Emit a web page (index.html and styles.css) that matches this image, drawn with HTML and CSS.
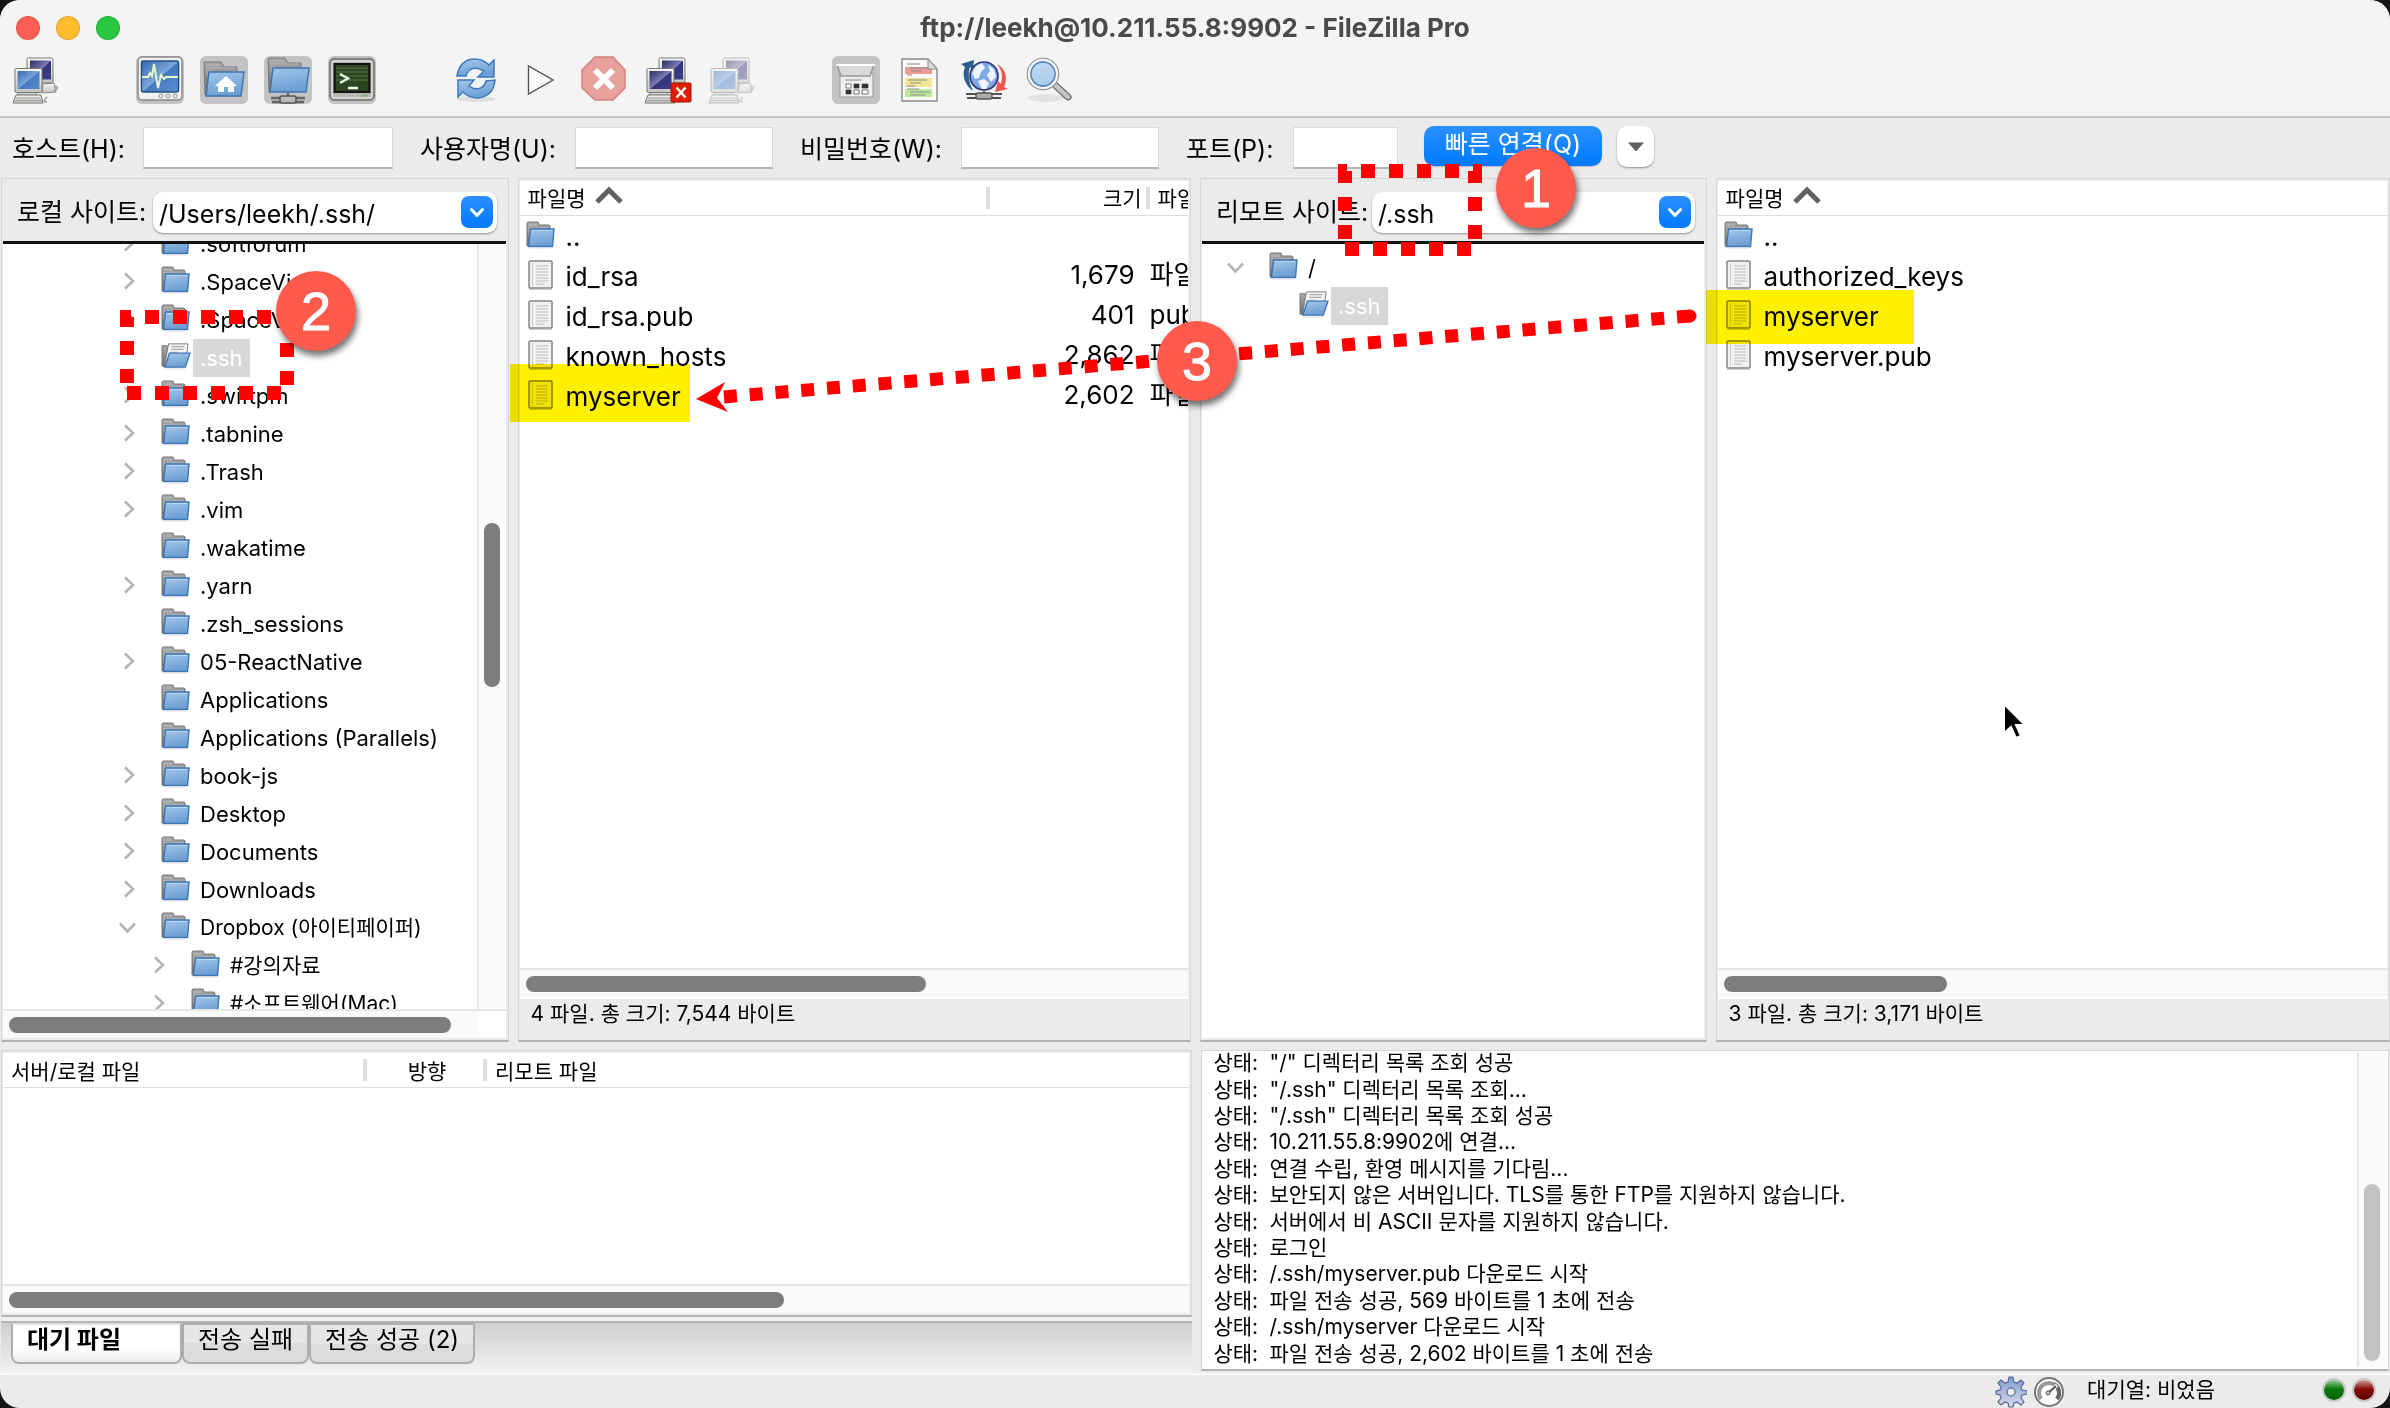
FILE: index.html
```html
<!DOCTYPE html>
<html lang="ko">
<head>
<meta charset="utf-8">
<title>ftp://leekh@10.211.55.8:9902 - FileZilla Pro</title>
<link rel="stylesheet" href="styles.css">
</head>
<body>
<svg class="defs" width="0" height="0" aria-hidden="true">
  <defs>
    <linearGradient id="blue" x1="0" y1="0" x2="0.3" y2="1"><stop offset="0" stop-color="#a3c6ea"/><stop offset="1" stop-color="#6c9fd3"/></linearGradient>
    <linearGradient id="screen" x1="0" y1="0" x2="1" y2="1"><stop offset="0" stop-color="#3568ae"/><stop offset=".5" stop-color="#7ba6dc"/><stop offset=".52" stop-color="#4579bf"/><stop offset="1" stop-color="#5b8fd2"/></linearGradient>
    <linearGradient id="navy" x1="0" y1="0" x2="1" y2="1"><stop offset="0" stop-color="#2a2a68"/><stop offset=".5" stop-color="#7d7db2"/><stop offset=".52" stop-color="#34347a"/><stop offset="1" stop-color="#40408a"/></linearGradient>
    <linearGradient id="grey" x1="0" y1="0" x2="0" y2="1"><stop offset="0" stop-color="#f8f8f5"/><stop offset="1" stop-color="#c4c4be"/></linearGradient>
    <linearGradient id="back" x1="0" y1="0" x2="0" y2="1"><stop offset="0" stop-color="#a9a9a9"/><stop offset="1" stop-color="#6e6e6e"/></linearGradient>
    <linearGradient id="gear" x1="0" y1="0" x2="0" y2="1"><stop offset="0" stop-color="#7d9cca"/><stop offset="1" stop-color="#dcd9ee"/></linearGradient>
    <symbol id="folder" viewBox="0 0 30 28">
      <path d="M1 25V2l1-1h10l1 3h10l1 1v18z" fill="url(#back)" stroke="#777"/>
      <path d="M2 4h9M2 7h20M2 10h4M2 13h3" stroke="#bbb"/>
      <path d="M4.500 8h23.500l-1.500 17.500H2.500z" fill="url(#blue)" stroke="#3e75b5" stroke-width="1.400"/>
      <path d="M6 9.500h20" stroke="#bcd8f3"/><path d="M3 27h22" stroke="#ddd"/>
    </symbol>
    <symbol id="folder-open" viewBox="0 0 32 30">
      <path d="M1 26V4h6l3 4v18z" fill="url(#back)" stroke="#777"/>
      <path d="M8 2h21l-3 22H4z" fill="#f4f4f4" stroke="#777"/>
      <path d="M11 5h14M11 8h13M10 11h8" stroke="#aaa" stroke-width="1.300"/>
      <path d="M9 12h22l-5 15H4z" fill="url(#blue)" stroke="#3e75b5" stroke-width="1.400"/><path d="M4 29h22" stroke="#ddd"/>
    </symbol>
    <symbol id="file" viewBox="0 0 26 30">
      <rect x="1" y="1" width="23" height="27" rx="1" fill="#f1f1f1" stroke="#858585" stroke-width="1.500"/>
      <path d="M4.500 3v23" stroke="#ccc"/>
      <path d="M8 6h12M8 9h12M8 12h12M8 15h12M8 18h12M8 21h12M8 24h8" stroke="#bbb"/>
      <path d="M1 29.500h23" stroke="#ccc"/>
    </symbol>
    <symbol id="right" viewBox="0 0 24 24"><path d="M8 4.500l8 7.500-8 7.500" fill="none" stroke="#b4b4b4" stroke-width="2.600"/></symbol>
    <symbol id="down" viewBox="0 0 24 24"><path d="M3 8.500l7.500 8 7.500-8" fill="none" stroke="#b4b4b4" stroke-width="2.600"/></symbol>
    <symbol id="sort" viewBox="0 0 28 20"><path d="M2 16L14 4l12 12" fill="none" stroke="#626262" stroke-width="5"/></symbol>
    <symbol id="pick" viewBox="0 0 32 32"><path d="M10.500 13.500l5.500 6 5.500-6" fill="none" stroke="#fff" stroke-width="3" stroke-linecap="round" stroke-linejoin="round"/></symbol>
    <symbol id="pcs" viewBox="0 0 48 48">
      <path d="M31 28l11-1 2 9-14 1z" fill="url(#grey)" stroke="#888"/>
      <rect x="15" y="2" width="26" height="25" rx="1.500" fill="url(#grey)" stroke="#777"/>
      <rect x="18" y="4.500" width="21" height="19" fill="url(#navy)"/>
      <path d="M42 31c5-2 4 3 0 3M35 41c-3 3-4 5 0 5" fill="none" stroke="#999" stroke-width="1.500"/>
      <path d="M8 35h14l3 4H5z" fill="#ddd" stroke="#888"/>
      <rect x="3" y="12.500" width="27" height="24" rx="1.500" fill="url(#grey)" stroke="#777"/>
      <rect x="5.500" y="15" width="22" height="18"/>
      <path d="M4 39h25l2 8H1z" fill="url(#grey)" stroke="#777"/>
      <path d="M4 42h25M3 44.500h27" stroke="#999"/>
    </symbol>
  </defs>
</svg>

<div class="window">
  <header class="titlebar">
    <div class="lights"><button class="light close" aria-label="닫기"></button><button class="light minimize" aria-label="최소화"></button><button class="light maximize" aria-label="확대"></button></div>
    <h1>ftp://leekh@10.211.55.8:9902 - FileZilla Pro</h1>
    <div class="toolbar">
      <div class="group">
        <button class="tool pc-blue" aria-label="사이트 관리자"><svg viewBox="0 0 48 48"><use href="#pcs"/></svg></button>
      </div>
      <div class="group">
        <button class="tool on" aria-label="메시지 로그"><svg viewBox="0 0 48 48"><rect x="2" y="1" width="44" height="43" rx="4" fill="#f1f1ee" stroke="#888" stroke-width="1.500"/><rect x="5.500" y="5" width="37" height="31" rx="2" fill="url(#screen)" stroke="#234d84" stroke-width="1.500"/><path d="M6 21h6l2-4 2 3 2-12 4 24 3-13 3 4 2-2h12" fill="none" stroke="#e8f7c8" stroke-width="2"/><g fill="#eee" stroke="#999"><circle cx="25" cy="40" r="2"/><circle cx="32" cy="40" r="2"/><circle cx="39" cy="40" r="2"/></g></svg></button>
        <button class="tool on" aria-label="로컬 트리"><svg viewBox="0 0 48 48"><path d="M5 39L4 6h17l3 5h13v26z" fill="url(#back)" stroke="#777"/><path d="M6 9h14M6 12h29M6 15h5M6 18h4" stroke="#b5b5b5"/><path d="M9 16h35l-3 24H6z" fill="url(#blue)" stroke="#3e75b5" stroke-width="1.500"/><path d="M26 20l11 10h-3v6h-6v-5h-4v5h-6v-6h-3z" fill="#fff"/></svg></button>
        <button class="tool on" aria-label="리모트 트리"><svg viewBox="0 0 48 48"><path d="M5 36L4 2h17l3 5h13v27z" fill="url(#back)" stroke="#777"/><path d="M6 5h14M6 8h29M6 11h5M6 14h4" stroke="#b5b5b5"/><path d="M9 12h36l-3 24H6z" fill="url(#blue)" stroke="#3e75b5" stroke-width="1.500"/><path d="M24 37v5M7 42h34M8 46h32" stroke="#666" stroke-width="2.500"/><rect x="16" y="40" width="16" height="7" rx="2" fill="#b8b8b8" stroke="#555" stroke-width="1.500"/></svg></button>
        <button class="tool on" aria-label="터미널"><svg viewBox="0 0 48 48"><rect x="2" y="3" width="44" height="41" rx="4" fill="#b9b9b4" stroke="#707070" stroke-width="1.500"/><rect x="4" y="5" width="40" height="37" rx="3" fill="none" stroke="#eee"/><rect x="6.500" y="8" width="35" height="28" fill="#2c4520" stroke="#111" stroke-width="2"/><path d="M8 12h32M8 16h32M8 20h32M8 24h32" stroke="#587646"/><path d="M12 18l8 4.500-8 4.500M20 32h10" fill="none" stroke="#e8ffe8" stroke-width="2.400"/><rect x="33" y="38.500" width="7" height="2" fill="#8a8"/></svg></button>
      </div>
      <div class="group">
        <button class="tool" aria-label="새로고침"><svg viewBox="0 0 48 48"><ellipse cx="24" cy="43" rx="19" ry="3" fill="#ddd"/><g fill="url(#blue)" stroke="#3c78bd" stroke-width="1.500"><path d="M5 20C7 8 14 3 23 3c7 0 11 3 14 6l5-5v17H26l6-6c-8-5-16-3-18 5z"/><path d="M43 24c-1 12-8 17-17 18-7 0-12-3-15-6l-5 5V24h16l-5 6c7 5 15 3 17-5z"/></g></svg></button>
        <button class="tool" aria-label="대기열 처리"><svg viewBox="0 0 48 48"><path d="M12.500 10v28L37 24z" fill="#fafafa" stroke="#555" stroke-width="1.400"/></svg></button>
        <button class="tool" aria-label="취소"><svg viewBox="0 0 48 48"><path d="M15 1h18l12 13v18L33 44H15L2 32V14z" fill="#e7a29d" stroke="#d87e79" stroke-width="1.500"/><path d="M15 14l18 18M33 14L15 32" stroke="#fff" stroke-width="6"/></svg></button>
        <button class="tool pc-navy" aria-label="연결 끊기"><svg viewBox="0 0 48 48"><use href="#pcs"/><rect x="27" y="27" width="20" height="19" rx="1" fill="#e01e05" stroke="#a51300"/><path d="M32.500 31.500l9 10M41.500 31.500l-9 10" stroke="#fff" stroke-width="2.600"/></svg></button>
        <button class="tool pc-blue faded" aria-label="다시 연결"><svg viewBox="0 0 48 48"><use href="#pcs"/></svg></button>
      </div>
      <div class="group">
        <button class="tool on" aria-label="파일 목록 필터"><svg viewBox="0 0 48 48"><rect x="8" y="17" width="33" height="24" fill="#eee" stroke="#999"/><path d="M5 9h37l-4 11H9z" fill="#d9d9d9" stroke="#999" stroke-width="1.500"/><path d="M4 9h39" stroke="#fff" stroke-width="2"/><path d="M13 24h17" stroke="#bbb" stroke-width="2"/><path d="M14 28h5v4h-5zM22 28h5v4h-5zM30 28h6v4h-6zM14 34h5v4h-5zM22 34h5v4h-5zM30 34h6v4h-6z" fill="#fff" stroke="#777"/><path d="M22 28h5v4h-5zM30 28h6v4h-6zM14 34h5v4h-5z" fill="#333"/></svg></button>
        <button class="tool" aria-label="디렉터리 비교"><svg viewBox="0 0 48 48"><path d="M6 3h26l9 10v32H6z" fill="#fafafa" stroke="#888" stroke-width="1.400"/><path d="M9 11h27v7H9z" fill="#eb9a97"/><path d="M9 22h27v9H9z" fill="#f3e795"/><path d="M9 33h27v8H9z" fill="#bfe8a0"/><path d="M11 8h13M14 12h18M15 15h10M11 19h5M12 24h19M14 27h11M11 30h8M11 33h12M14 36h20M14 39h16" stroke="#8b8b8b"/><path d="M32 3v10h9z" fill="#ddd" stroke="#888"/></svg></button>
        <button class="tool" aria-label="동기화된 탐색"><svg viewBox="0 0 48 48"><path d="M14 4L1 8l4 3C1 20 6 30 13 35 8 25 8 17 10 11l3 3z" fill="#2b5f91"/><path d="M37 8c9 5 11 14 7 23l4 2-13 3 3-11 3 3c2-8 1-14-4-20z" fill="#f0564d"/><circle cx="24" cy="20" r="14" fill="#7fa9e2" stroke="#343478" stroke-width="1.700"/><path d="M12 17l4-7 6-3 3 5-4 4-2 6-4 1zM18 25l6-2 5 4-3 6h-4zM28 9l6 4 2 8-5 5-4-7 3-4z" fill="#eef4fb"/><path d="M24 35v7M6 38h36M7 42h34" stroke="#555" stroke-width="1.800"/><rect x="16" y="37" width="16" height="6" rx="2" fill="#aaa" stroke="#555" stroke-width="1.300"/></svg></button>
        <button class="tool" aria-label="파일 검색"><svg viewBox="0 0 48 48"><ellipse cx="22" cy="42" rx="18" ry="4" fill="#e2e2e2"/><path d="M31 29l13 12" stroke="#666" stroke-width="7" stroke-linecap="round"/><path d="M31 29l13 12" stroke="#c4c4c4" stroke-width="4.500" stroke-linecap="round"/><circle cx="19" cy="18" r="14" fill="#d0e4f8" stroke="#8b8b8b" stroke-width="4.500"/><circle cx="19" cy="18" r="14" fill="none" stroke="#f4f4f4" stroke-width="2.500"/><circle cx="19" cy="18" r="12" fill="url(#blue)" fill-opacity=".35" stroke="#4f85c5" stroke-width="1.300"/></svg></button>
      </div>
    </div>
  </header>

  <form class="quick">
    <div class="field host"><label for="host">호스트(H):</label><input id="host" type="text"></div>
    <div class="field user"><label for="user">사용자명(U):</label><input id="user" type="text"></div>
    <div class="field pass"><label for="pass">비밀번호(W):</label><input id="pass" type="password"></div>
    <div class="field port"><label for="port">포트(P):</label><input id="port" type="text"></div>
    <button type="button" class="connect">빠른 연결(Q)</button>
    <button type="button" class="history" aria-label="최근 연결"><svg viewBox="0 0 20 12"><path d="M1 1h18l-9 10z" fill="#606060"/></svg></button>
  </form>

  <main class="panes">
    <section class="pane">
      <div class="site local"><label for="local">로컬 사이트:</label><div class="combo"><select id="local"><option>/Users/leekh/.ssh/</option></select><svg class="pick" viewBox="0 0 32 32"><use href="#pick"/></svg></div></div>
      <div class="treebox">
        <div class="treerow">
          <ul class="tree scrolled">
            <li><svg class="chev"><use href="#right"/></svg><svg class="ico"><use href="#folder"/></svg><span>.softforum</span></li>
            <li><svg class="chev"><use href="#right"/></svg><svg class="ico"><use href="#folder"/></svg><span>.SpaceVim</span></li>
            <li><svg class="chev"><use href="#right"/></svg><svg class="ico"><use href="#folder"/></svg><span>.SpaceVim.d</span></li>
            <li><i class="chev"></i><svg class="ico"><use href="#folder-open"/></svg><span class="selected">.ssh</span></li>
            <li><svg class="chev"><use href="#right"/></svg><svg class="ico"><use href="#folder"/></svg><span>.swiftpm</span></li>
            <li><svg class="chev"><use href="#right"/></svg><svg class="ico"><use href="#folder"/></svg><span>.tabnine</span></li>
            <li><svg class="chev"><use href="#right"/></svg><svg class="ico"><use href="#folder"/></svg><span>.Trash</span></li>
            <li><svg class="chev"><use href="#right"/></svg><svg class="ico"><use href="#folder"/></svg><span>.vim</span></li>
            <li><i class="chev"></i><svg class="ico"><use href="#folder"/></svg><span>.wakatime</span></li>
            <li><svg class="chev"><use href="#right"/></svg><svg class="ico"><use href="#folder"/></svg><span>.yarn</span></li>
            <li><i class="chev"></i><svg class="ico"><use href="#folder"/></svg><span>.zsh_sessions</span></li>
            <li><svg class="chev"><use href="#right"/></svg><svg class="ico"><use href="#folder"/></svg><span>05-ReactNative</span></li>
            <li><i class="chev"></i><svg class="ico"><use href="#folder"/></svg><span>Applications</span></li>
            <li><i class="chev"></i><svg class="ico"><use href="#folder"/></svg><span>Applications (Parallels)</span></li>
            <li><svg class="chev"><use href="#right"/></svg><svg class="ico"><use href="#folder"/></svg><span>book-js</span></li>
            <li><svg class="chev"><use href="#right"/></svg><svg class="ico"><use href="#folder"/></svg><span>Desktop</span></li>
            <li><svg class="chev"><use href="#right"/></svg><svg class="ico"><use href="#folder"/></svg><span>Documents</span></li>
            <li><svg class="chev"><use href="#right"/></svg><svg class="ico"><use href="#folder"/></svg><span>Downloads</span></li>
            <li class="hangul"><svg class="chev"><use href="#down"/></svg><svg class="ico"><use href="#folder"/></svg><span>Dropbox (아이티페이퍼)</span></li>
            <li class="child hangul"><svg class="chev"><use href="#right"/></svg><svg class="ico"><use href="#folder"/></svg><span>#강의자료</span></li>
            <li class="child hangul"><svg class="chev"><use href="#right"/></svg><svg class="ico"><use href="#folder"/></svg><span>#소프트웨어(Mac)</span></li>
          </ul>
          <div class="vtrack tree-v"><div class="thumb"></div></div>
        </div>
        <div class="htrack with-corner"><div class="thumb tree-h"></div></div>
      </div>
    </section>

    <section class="pane">
      <div class="list">
        <table>
          <colgroup><col class="c-name"><col class="c-size"><col class="c-type"></colgroup>
          <thead><tr><th>파일명 <svg class="sort"><use href="#sort"/></svg></th><th class="num">크기</th><th>파일 유형</th></tr></thead>
          <tbody>
            <tr><td><svg class="ico"><use href="#folder"/></svg>..</td><td></td><td></td></tr>
            <tr><td><svg class="ico"><use href="#file"/></svg>id_rsa</td><td class="num">1,679</td><td>파일</td></tr>
            <tr><td><svg class="ico"><use href="#file"/></svg>id_rsa.pub</td><td class="num">401</td><td>pub-파일</td></tr>
            <tr><td><svg class="ico"><use href="#file"/></svg>known_hosts</td><td class="num">2,862</td><td>파일</td></tr>
            <tr><td><svg class="ico"><use href="#file"/></svg>myserver</td><td class="num">2,602</td><td>파일</td></tr>
          </tbody>
        </table>
      </div>
      <div class="htrack"><div class="thumb list-h"></div></div>
      <p class="summary">4 파일. 총 크기: 7,544 바이트</p>
    </section>

    <section class="pane">
      <div class="site remote"><label for="remote">리모트 사이트:</label><div class="combo"><select id="remote"><option>/.ssh</option></select><svg class="pick" viewBox="0 0 32 32"><use href="#pick"/></svg></div></div>
      <div class="treebox">
        <ul class="tree remote-tree">
          <li><svg class="chev"><use href="#down"/></svg><svg class="ico"><use href="#folder"/></svg><span>/</span></li>
          <li class="child"><i class="chev"></i><svg class="ico"><use href="#folder-open"/></svg><span class="selected">.ssh</span></li>
        </ul>
      </div>
    </section>

    <section class="pane">
      <div class="list">
        <table>
          <thead><tr><th class="last">파일명 <svg class="sort"><use href="#sort"/></svg></th></tr></thead>
          <tbody>
            <tr><td><svg class="ico"><use href="#folder"/></svg>..</td></tr>
            <tr><td><svg class="ico"><use href="#file"/></svg>authorized_keys</td></tr>
            <tr><td><svg class="ico"><use href="#file"/></svg>myserver</td></tr>
            <tr><td><svg class="ico"><use href="#file"/></svg>myserver.pub</td></tr>
          </tbody>
        </table>
      </div>
      <div class="htrack"><div class="thumb remote-h"></div></div>
      <p class="summary">3 파일. 총 크기: 3,171 바이트</p>
    </section>
  </main>

  <div class="lower">
    <section class="transfers">
      <div class="pane queue">
        <div class="list">
          <table>
            <colgroup><col class="q-local"><col class="q-dir"><col></colgroup>
            <thead><tr><th>서버/로컬 파일</th><th class="mid">방향</th><th class="last">리모트 파일</th></tr></thead>
          </table>
        </div>
        <div class="htrack"><div class="thumb queue-h"></div></div>
      </div>
      <nav class="tabs"><button class="active">대기 파일</button><button>전송 실패</button><button>전송 성공 (2)</button></nav>
    </section>
    <section class="pane log">
      <ol>
        <li><span>상태:</span>"/" 디렉터리 목록 조회 성공</li>
        <li><span>상태:</span>"/.ssh" 디렉터리 목록 조회...</li>
        <li><span>상태:</span>"/.ssh" 디렉터리 목록 조회 성공</li>
        <li><span>상태:</span>10.211.55.8:9902에 연결...</li>
        <li><span>상태:</span>연결 수립, 환영 메시지를 기다림...</li>
        <li><span>상태:</span>보안되지 않은 서버입니다. TLS를 통한 FTP를 지원하지 않습니다.</li>
        <li><span>상태:</span>서버에서 비 ASCII 문자를 지원하지 않습니다.</li>
        <li><span>상태:</span>로그인</li>
        <li><span>상태:</span>/.ssh/myserver.pub 다운로드 시작</li>
        <li><span>상태:</span>파일 전송 성공, 569 바이트를 1 초에 전송</li>
        <li><span>상태:</span>/.ssh/myserver 다운로드 시작</li>
        <li><span>상태:</span>파일 전송 성공, 2,602 바이트를 1 초에 전송</li>
      </ol>
      <div class="vtrack log-v"><div class="thumb"></div></div>
    </section>
  </div>

  <footer class="status">
    <svg class="gear" viewBox="0 0 32 32"><path d="M14 1h4l1 5 3 1 4-3 3 3-3 4 1 3 5 1v3l-5 1-1 3 3 4-3 3-4-3-3 1-1 4h-4l-1-4-3-1-4 3-3-3 3-4-1-3-4-1v-3l4-1 1-3-3-4 3-3 4 3 3-1z" fill="url(#gear)" stroke="#55688f" stroke-width="1.200"/><circle cx="16" cy="16" r="4" fill="#eee" stroke="#6d7da3" stroke-width="1.500"/></svg>
    <svg class="gauge" viewBox="0 0 32 32"><circle cx="16" cy="16" r="14" fill="#fdfdfd" stroke="#777" stroke-width="2"/><path d="M8 23a10 10 0 1 1 16 0" fill="none" stroke="#999" stroke-width="4"/><path d="M21 8a10 10 0 0 1 3 15" fill="none" stroke="#666" stroke-width="4"/><path d="M15 17l9-8" stroke="#eee" stroke-width="4"/><path d="M15 17l8-7" stroke="#555" stroke-width="2"/><circle cx="15" cy="17" r="2" fill="#ccc" stroke="#555"/></svg>
    <p>대기열: 비었음</p>
    <i class="led green"></i><i class="led red"></i>
  </footer>
</div>

<div class="marker marker-local"></div>
<div class="marker marker-remote"></div>
<svg class="notes" width="2390" height="1408" viewBox="0 0 2390 1408">
  <g fill="#f00">
    <path d="M1338 164h9v7h5v12h-14zM1473 164h9v19h-14v-12h5zM1361 164h14v14h-14zM1389 164h14v14h-14zM1417 164h14v14h-14zM1445 164h14v14h-14zM1338 197h14v14h-14zM1338 225h14v14h-14zM1468 197h14v14h-14zM1468 225h14v14h-14zM1345 242h14v14h-14zM1373 242h14v14h-14zM1401 242h14v14h-14zM1429 242h14v14h-14zM1457 242h14v14h-14z"/>
    <path d="M120 310h11v7h3v10h-14zM145 310h14v14h-14zM173 310h14v14h-14zM201 310h14v14h-14zM229 310h14v14h-14zM257 310h14v14h-14zM120 341h14v14h-14zM120 369h14v14h-14zM280 343h14v14h-14zM280 371h14v14h-14zM127 386h14v14h-14zM155 386h14v14h-14zM183 386h14v14h-14zM211 386h14v14h-14zM239 386h14v14h-14zM267 386h14v14h-14z"/>
    <circle cx="1690" cy="316" r="6.500"/>
    <path d="M696 399l29-17-8 16 11 14z"/>
  </g>
  <path d="M1690 316L723 397" stroke="#f00" stroke-width="13" stroke-dasharray="13 12.850"/>
  <path d="M2004 704v29l7-6 5 11 5-2-5-11h9z" fill="#000" stroke="#fff" stroke-width="2"/>
  <g class="balls"><circle cx="1536" cy="188" r="40"/><circle cx="316" cy="311" r="40"/><circle cx="1197" cy="361" r="40"/></g>
  <g class="digits"><text x="1536" y="207">1</text><text x="316" y="330">2</text><text x="1197" y="380">3</text></g>
</svg>
</body>
</html>
```
FILE: styles.css
```css
* { box-sizing: border-box; }
body {
  margin: 0;
  background: #141414;
  color: #000;
  font: 22px/28px Inter, "Noto Sans CJK KR", sans-serif;
}
button, input, select { font: inherit; color: inherit; border: 0; margin: 0; padding: 0; }
ul, ol { list-style: none; margin: 0; padding: 0; }
p, h1 { margin: 0; }
svg { display: block; flex: none; }
.defs { position: absolute; }

.window {
  height: 100vh;
  display: flex;
  flex-direction: column;
  overflow: hidden;
  border-radius: 20px;
  background: #ebebeb;
}

/* title bar and toolbar */
.titlebar {
  flex: none;
  display: grid;
  grid-template-columns: 1fr auto 1fr;
  align-items: center;
  padding: 4px 12px;
  background: #f4f4f4;
  border-bottom: 2px solid #c4c4c4;
}
.lights { display: flex; gap: 16px; padding-left: 4px; }
.light { width: 24px; height: 24px; border-radius: 50%; border: 1px solid rgba(0, 0, 0, .12); }
.close { background: #ff5f57; }
.minimize { background: #febc2e; }
.maximize { background: #28c840; }
h1 { grid-column: 2; font-size: 26px; line-height: 48px; font-weight: 700; color: #4a4a4a; }
.toolbar { grid-column: 1 / -1; display: flex; gap: 76px; padding: 4px 0 8px; }
.group { display: flex; gap: 16px; }
.tool { width: 48px; height: 48px; border-radius: 6px; background: none; }
.tool svg { width: 48px; height: 48px; }
.on { background: #c3c3c3; }
.pc-blue { fill: url(#screen); }
.pc-navy { fill: url(#navy); }
.faded { opacity: .45; }

/* quick connect */
.quick { flex: none; display: flex; gap: 27px; height: 60px; padding: 8px 12px; font-size: 25px; }
.field { display: grid; height: 42px; align-items: center; }
.field label { line-height: 42px; padding-top: 2px; }
.host { grid-template-columns: 131px 250px; }
.user { grid-template-columns: 155px 198px; }
.pass { grid-template-columns: 161px 198px; }
.port { grid-template-columns: 107px 105px; }
.field input { width: 100%; height: 42px; border: 1px solid #dadada; border-bottom: 2px solid #b4b4b4; background: #fff; }
.connect {
  width: 178px; height: 40px; padding-bottom: 4px; margin-left: -1px;
  border-radius: 10px; color: #fff;
  background: linear-gradient(#2b90ff, #007aff);
  box-shadow: 0 1px 1px rgba(0, 0, 0, .2);
}
.history {
  display: grid; place-items: center;
  width: 37px; height: 41px; margin-left: -12px;
  border-radius: 10px; background: #fff;
  box-shadow: 0 1px 2px rgba(0, 0, 0, .4);
}
.history svg { width: 18px; height: 12px; }

/* panes */
.panes {
  flex: 865 1 0; min-height: 0;
  display: grid; gap: 9px;
  grid-template-columns: 508fr 674fr 507fr 675fr;
  grid-template-rows: minmax(0, 1fr);
  padding-left: 1px;
}
.pane {
  display: flex; flex-direction: column;
  min-width: 0; min-height: 0; overflow: hidden;
  padding: 2px 2px 2px 1px;
  border: 1px solid #d6d6d6; border-bottom: 2px solid #b2b2b2;
}
.site { flex: none; display: flex; align-items: center; height: 63px; padding: 2px 9px 0 14px; border-bottom: 3px solid #111; font-size: 25px; }
.site label { flex: none; }
.local label { width: 136px; }
.remote label { width: 156px; }
.combo { position: relative; flex: 1; }
.combo select {
  display: block; width: 100%; height: 41px; padding: 4px 6px 0;
  appearance: none; background: #fff; border-radius: 10px;
  box-shadow: 0 1px 2px rgba(0, 0, 0, .4);
}
.pick { position: absolute; right: 4px; top: 4px; width: 32px; height: 32px; border-radius: 8px; background: linear-gradient(#2b90ff, #007aff); pointer-events: none; }

.treebox { flex: 1; min-height: 0; display: flex; flex-direction: column; background: #fff; }
.treerow { flex: 1; min-height: 0; display: flex; }
.tree { flex: 1; min-width: 0; overflow: hidden; }
.tree li { display: flex; align-items: center; height: 38px; padding-left: 114px; }
.tree .child { padding-left: 144px; }
.scrolled li:first-child { margin-top: -19px; }
.remote-tree { padding-top: 5px; }
.remote-tree li { padding-left: 23px; }
.remote-tree .child { padding-left: 53px; }
.tree .chev { flex: none; width: 24px; height: 24px; margin: 0 20px 2px 0; }
.tree .ico { width: 30px; height: 28px; margin: 0 2px 4px 0; }
.tree span { padding: 0 7px; line-height: 38px; white-space: nowrap; }
.hangul { font-size: 21px; }
.selected { background: #d8d8d8; color: #fff; }

.list { flex: 1; min-height: 0; overflow: hidden; background: #fff; }
.list table { width: 100%; table-layout: fixed; border-collapse: collapse; }
.c-name { width: 470px; }
.c-size { width: 160px; }
.c-type { width: 160px; }
.q-local { width: 364px; }
.q-dir { width: 120px; }
th {
  height: 34px; padding: 3px 8px 0; text-align: left; white-space: nowrap;
  font-size: 21px; font-weight: 400; border-bottom: 1px solid #ddd;
  background: linear-gradient(#dedede, #dedede) no-repeat right 6px / 4px 22px;
}
th.last { background: none; }
th.mid { text-align: center; }
th .sort { display: inline-block; width: 28px; height: 20px; margin-left: 4px; }
td { height: 40px; padding: 0; font-size: 26px; white-space: nowrap; }
td:first-child { padding-left: 6px; }
td .ico { display: inline-block; width: 30px; height: 30px; margin-right: 10px; vertical-align: -4px; }
th.num { text-align: right; }
td.num { text-align: right; padding-right: 15px; }

.vtrack { flex: none; width: 29px; padding: 0 4px 0 5px; border-left: 2px solid #e6e6e6; background: #fafafa; }
.htrack { flex: none; height: 29px; padding: 6px 6px 0; border-top: 2px solid #e6e6e6; background: #fafafa; }
.thumb { border-radius: 8px; background: #7d7d7d; }
.htrack .thumb { height: 16px; }
.vtrack .thumb { width: 16px; }
.tree-v { display: grid; grid-template-rows: 279fr 163fr 322fr; }
.tree-v .thumb { grid-row: 2; }
.with-corner { background: linear-gradient(90deg, #fafafa calc(100% - 27px), #fff 0); }
.tree-h { width: 90%; }
.list-h { width: 61%; }
.remote-h { width: 34%; }
.queue-h { width: 66%; }
.summary { flex: none; height: 41px; padding: 1px 11px; font-size: 21px; border-top: 2px solid #fff; }

/* lower part */
.lower { flex: 323 1 0; min-height: 0; display: grid; grid-template-columns: 1192fr 1188fr; grid-template-rows: minmax(0, 1fr); gap: 9px; padding: 8px 1px 0; }
.transfers { display: flex; flex-direction: column; min-width: 0; }
.queue { flex: 1; }
.tabs {
  flex: none; display: flex; align-items: flex-start; height: 56px;
  padding: 2px 10px 9px; border-top: 4px solid #f0f0f0;
  box-shadow: inset 0 2px #b4b4b4;
  background: linear-gradient(#cdcdcd, #f2f2f2);
}
.tabs button {
  height: 41px; padding: 0 14px 9px; line-height: 30px; text-align: left; font-size: 24px;
  border: 2px solid #adadad; border-radius: 0 0 8px 8px;
  background: linear-gradient(#e6e6e6 50%, #dcdcdc 50%);
}
.tabs .active { width: 171px; font-weight: 700; background: linear-gradient(#fff 60%, #eee); border-top-color: #e0e0e0; }
.log { flex-direction: row; margin-bottom: 2px; background: #fff; }
.log ol { flex: 1; display: grid; grid-template-rows: repeat(12, minmax(0, 1fr)); margin-top: -3px; padding-left: 10px; font-size: 21px; line-height: 26px; }
.log li { display: flex; white-space: pre; }
.log li span { flex: none; width: 56px; }
.log-v { display: grid; grid-template-rows: 132fr 178fr 6fr; }
.log-v .thumb { grid-row: 2; background: #c2c2c2; }

.status { flex: none; display: flex; align-items: center; height: 35px; padding: 0 16px 0 0; border-top: 2px solid #fafafa; justify-content: flex-end; font-size: 21px; }
.gear, .gauge { width: 32px; height: 32px; margin-right: 6px; }
.status p { margin: 0 99px 4px 16px; line-height: 28px; }
.led { width: 20px; height: 20px; margin: 0 0 3px 10px; border-radius: 50%; box-shadow: 0 0 0 2px #c8c8c8; }
.green { background: linear-gradient(#9acb9a, #0a7a0a 45%, #046004); }
.red { background: linear-gradient(#d09a9a, #8a0c08 45%, #5c0503); }

/* tutorial annotations */
.marker { position: absolute; background: #fff000; mix-blend-mode: multiply; pointer-events: none; }
.marker-local { left: 510px; top: 364px; width: 180px; height: 58px; }
.marker-remote { left: 1706px; top: 290px; width: 208px; height: 54px; }
.notes { position: absolute; left: 0; top: 0; pointer-events: none; }
.balls { fill: #ff5a4c; filter: drop-shadow(2px 5px 3px rgba(0, 0, 0, .55)); }
.digits { fill: #fff; stroke: #fff; stroke-width: 1px; font: 54px "Liberation Sans", sans-serif; text-anchor: middle; }
```
